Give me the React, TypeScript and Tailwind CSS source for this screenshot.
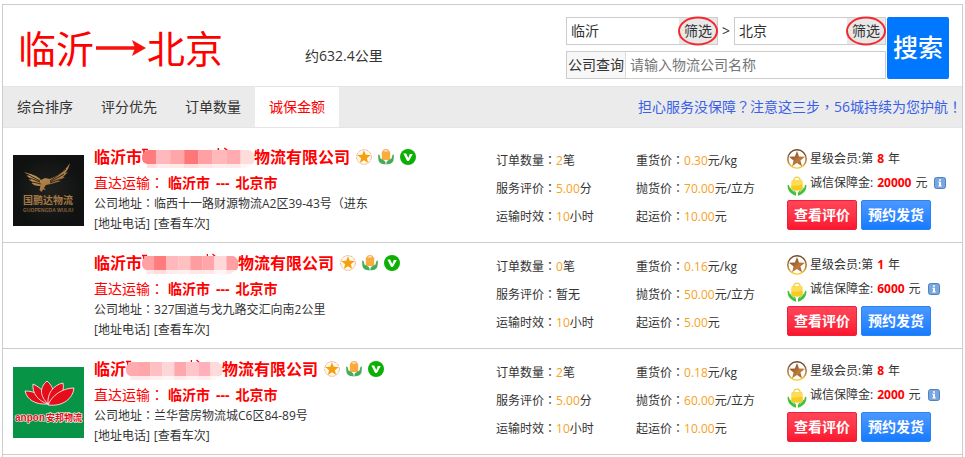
import React, { useState } from 'react';

type LogoKind = 'eagle' | 'lotus' | null;

interface Company {
  id: number;
  logo: LogoKind;
  prefix: string;
  maskWidth: number;
  maskColors: string[];
  address: string;
  orders: string;
  rating: string;
  hours: string;
  heavyPrice: string;
  lightPrice: string;
  startPrice: string;
  years: string;
  deposit: string;
}

const companies: Company[] = [
  {
    id: 1,
    logo: 'eagle',
    prefix: '临沂市',
    maskWidth: 112,
    maskColors: ['#ff7b7d', '#ffb9bc', '#ffa6a9', '#ff7678', '#ffa0a4', '#ffb9bb', '#ffabb0', '#ffdcdc'],
    address: '临西十一路财源物流A2区39-43号（进东',
    orders: '2',
    rating: '5.00',
    hours: '10',
    heavyPrice: '0.30',
    lightPrice: '70.00',
    startPrice: '10.00',
    years: '8',
    deposit: '20000',
  },
  {
    id: 2,
    logo: null,
    prefix: '临沂市',
    maskWidth: 96,
    maskColors: ['#ffa0a2', '#ff7b7d', '#ffb9bc', '#ffc0c2', '#ff9ca0', '#ffa6ab', '#ffd8da', '#ffa0a3'],
    address: '327国道与戈九路交汇向南2公里',
    orders: '0',
    rating: '',
    hours: '10',
    heavyPrice: '0.16',
    lightPrice: '50.00',
    startPrice: '5.00',
    years: '1',
    deposit: '6000',
  },
  {
    id: 3,
    logo: 'lotus',
    prefix: '临沂',
    maskWidth: 96,
    maskColors: ['#ffaaae', '#ffa6aa', '#ffc0c3', '#ffd6d8', '#ffa8ac', '#ffc5c8', '#ffb0b8', '#ffdada'],
    address: '兰华营房物流城C6区84-89号',
    orders: '2',
    rating: '5.00',
    hours: '10',
    heavyPrice: '0.18',
    lightPrice: '60.00',
    startPrice: '10.00',
    years: '8',
    deposit: '2000',
  },
];

const sortTabs = ['综合排序', '评分优先', '订单数量', '诚保金额'];

const STAR = 'M10 1.5 12.2 7.3 18.4 7.6 13.6 11.5 15.2 17.5 10 14.1 4.8 17.5 6.4 11.5 1.6 7.6 7.8 7.3Z';

// Full-width punctuation, centred in its cell
const Mark = ({ children }: { children: string }) => (
  <span className="font-['Noto_Sans_CJK_TC',sans-serif] leading-none">{children}</span>
);

const StarBadge = () => (
  <svg viewBox="0 0 20 20" className="size-4 shrink-0">
    <circle cx="10" cy="10" r="9.2" fill="#fffaf3" stroke="#e8b184" strokeWidth="1.1" strokeDasharray="4 1" />
    <path d={STAR} fill="#f7a00c" />
  </svg>
);

const HandsBadge = () => (
  <svg viewBox="0 0 16 16" className="size-4 shrink-0">
    <path d="M5.2 3.2C5.2-.2 10.8-.2 10.8 3.2" fill="none" stroke="#f5b264" strokeWidth="1.2" />
    <path d="M3.8 2.4h8.400v8.600H3.800Z" fill="#f9ab3e" />
    <path d="M.1 6C.3 5.200 1.300 5.200 1.700 6.400L2.500 9.500l4 2.200c1 .7 1.200 2 1.100 3.800C3.600 15.400.8 14 .4 10.600Z" fill="#45ad58" />
    <path d="M15.900 6c-.2-.8-1.200-.8-1.600.4l-.8 3.100-4 2.200c-1 .7-1.200 2-1.100 3.800 4-.1 6.800-1.500 7.200-4.900Z" fill="#45ad58" />
  </svg>
);

const CheckBadge = () => (
  <svg viewBox="0 0 16 16" className="size-4 shrink-0">
    <circle cx="8" cy="8" r="8" fill="#0cb005" />
    <path d="M3.4 4.6h2.8L8.3 9l1.5-4h3L8.9 12H7.1Z" fill="#fff" />
  </svg>
);

const MemberIcon = () => (
  <svg viewBox="0 0 20 20" className="size-5">
    <defs>
      <linearGradient id="ring" x1="0" y1="0" x2="0" y2="1">
        <stop offset="0" stopColor="#6d4226" />
        <stop offset="0.6" stopColor="#b47a33" />
        <stop offset="1" stopColor="#ffd33b" />
      </linearGradient>
      <linearGradient id="bronze" x1="0" y1="0" x2="1" y2="1">
        <stop offset="0" stopColor="#6d3d1b" />
        <stop offset="0.6" stopColor="#c07a3a" />
        <stop offset="1" stopColor="#8a5222" />
      </linearGradient>
    </defs>
    <circle cx="10" cy="10" r="9.2" fill="#fff" stroke="url(#ring)" strokeWidth="1.5" />
    <path d={STAR} fill="url(#bronze)" transform="translate(.5 .5) scale(.95)" />
  </svg>
);

const DepositIcon = () => (
  <svg viewBox="0 0 20 20" className="size-5">
    <path d="M6.7 5.2C6.9-.3 13.1-.3 13.3 5.2" fill="none" stroke="#f2cf3a" strokeWidth="1.4" />
    <path d="M4.800 4.200h10.400l.8 9.300c-1.800 1.500-10.200 1.500-12 0Z" fill="#fbc91f" />
    <path d="M4.800 4.200h10.400l.3 3.600C12 10 8 10 4.500 9.500Z" fill="#fddd55" />
    <path d="M.6 9c1.400-.6 1.700.8 2 2.600L7.700 15c1.400 1 1.500 2.500 1.300 4.700-2.200-.4-3.200-1.500-4.800-2.500C1.700 15.600.4 12.500.6 9Z" fill="#43c035" />
    <path d="M19.400 9c-1.400-.6-1.700.8-2 2.600L12.300 15c-1.400 1-1.500 2.500-1.300 4.700 2.200-.4 3.200-1.500 4.800-2.500 2.500-1.600 3.800-4.700 3.600-8.200Z" fill="#43c035" />
    <path d="m4 12.600 3.300 3.200M16 12.600l-3.300 3.200" stroke="#fff" strokeWidth=".8" />
  </svg>
);

const InfoIcon = () => (
  <svg viewBox="0 0 12 12" className="size-3">
    <rect x=".5" y=".5" width="11" height="11" rx="2" fill="#79a6dc" stroke="#4f82c4" />
    <path d="M5 2.200h2v1.500H5ZM4.300 4.800H7v3.700h.8v1H4.300v-1H5V5.700h-.7Z" fill="#fff" />
  </svg>
);

const EagleLogo = () => (
  <svg viewBox="0 0 71 71" className="size-[71px]">
    <defs>
      <radialGradient id="night">
        <stop offset="0" stopColor="#20211f" />
        <stop offset="1" stopColor="#101211" />
      </radialGradient>
      <linearGradient id="gold" x1="0" y1="0" x2="1" y2="1">
        <stop offset="0" stopColor="#d8ad6b" />
        <stop offset="1" stopColor="#8b5a2a" />
      </linearGradient>
    </defs>
    <rect width="71" height="71" fill="url(#night)" />
    <path
      d="M11 17c6 2 13 3 17 8l4-2 5 1c7-3 14-7 20-16-1 4-2 7-5 10l3-1-5 5h2l-7 4h3l-10 3-5 1-2 3 2 2-3-.5-1.500 2.500-2-2 1-4c-4 .5-7-1-9-3l2-.5-5-3h3l-5-4h3Z"
      fill="url(#gold)"
    />
    <path d="M14 19l13 7M17 23l10 4M20 27l8 2M53 14l-16 12M51 19l-14 8M48 24l-11 4" stroke="#252018" strokeWidth=".9" />
    <text x="10" y="49" className="text-[10px] font-bold" fill="#a47845">国鹏达物流</text>
    <text x="10" y="57" className="font-['Liberation_Sans',sans-serif] text-[5px] font-bold" fill="#87633d">GUOPENGDA WULIU</text>
  </svg>
);

const LotusLogo = () => (
  <svg viewBox="0 0 71 71" className="size-[71px]">
    <rect width="71" height="71" fill="#079447" />
    <g fill="#e50d19" stroke="#fff" strokeWidth=".8" strokeLinejoin="round">
      <path d="M35 37C23 38 14 33 12 24c9 0 19 4 23 13Z" />
      <path d="M35 37c-10-3-16-11-15-20 9 4 14 11 15 20Z" />
      <path d="M35 37c-8-8-9-16-1-23 8 7 9 16 1 23Z" />
      <path d="M35 37c-1-10 5-19 15-21 2 10-4 18-15 21Z" />
      <path d="M35 38c4-10 15-17 26-17-1 11-12 19-26 17Z" />
    </g>
    <g fill="#e50d19" stroke="#fff" strokeWidth="1.200" paintOrder="stroke">
      <text x="2" y="54" className="font-['Liberation_Sans',sans-serif] text-[10px] font-bold">anpon</text>
      <text x="33" y="54" className="text-[9px] font-bold">安邦物流</text>
    </g>
  </svg>
);

const NameMask = ({ width, colors }: { width: number; colors: string[] }) => (
  <svg viewBox="0 0 113 22" preserveAspectRatio="none" className="h-[22px] shrink-0" style={{ width }}>
    <path d="M0 3.500h6M2 4v12M77 2v4M83 2l4 3" stroke="#f00" strokeWidth="1.500" fill="none" />
    <clipPath id="pill">
      <path d="M6 4h101c8 1 9 14 2 15l-5 3H5v-4C-2 17-2 6 6 4Z" />
    </clipPath>
    <g clipPath="url(#pill)">
      {colors.map((color, i) => (
        <g key={i} fill={color}>
          <rect x={i * 14.2} y="3" width="14.400" height="15" />
          <rect x={i * 14.2} y="18" width="14.400" height="4" opacity=".25" />
        </g>
      ))}
    </g>
  </svg>
);

const RedCircle = () => (
  <svg viewBox="0 0 42 30" className="pointer-events-none absolute -top-0.5 -left-0.5 h-[30px] w-[42px]">
    <ellipse cx="21" cy="15" rx="19" ry="13.500" fill="none" stroke="#f5282d" strokeWidth="2" />
  </svg>
);

interface CityFieldProps {
  label: string;
  value: string;
  onChange: (value: string) => void;
}

const CityField: React.FC<CityFieldProps> = ({ label, value, onChange }) => (
  <div className="flex h-7 w-[152px] border border-[#ccc]">
    <input
      aria-label={label}
      value={value}
      onChange={e => onChange(e.target.value)}
      className="min-w-0 flex-1 bg-white px-1 text-sm outline-none"
    />
    <button type="button" className="relative w-[38px] bg-[#e8e8e8] text-sm">
      筛选
      <RedCircle />
    </button>
  </div>
);

interface StatProps {
  label: string;
  value: string;
  unit: string;
}

const Stat: React.FC<StatProps> = ({ label, value, unit }) => (
  <p>
    {label}
    <Mark>：</Mark>
    <span className="text-[#f9a11b]">{value}</span>
    {unit}
  </p>
);

const CompanyRow: React.FC<{ company: Company }> = ({ company }) => (
  <li className="flex h-[106px] border-b border-[#ccc] text-xs whitespace-nowrap">
    <div className="ml-2.5 w-[81px] shrink-0 pt-[18px]">
      {company.logo === 'eagle' && <EagleLogo />}
      {company.logo === 'lotus' && <LotusLogo />}
    </div>

    <div className="min-w-0 flex-1 pt-[5px]">
      <div className="flex h-[30px] items-center gap-1.5">
        <h2 className="flex items-center text-base font-bold text-[#f00]">
          {company.prefix}
          <NameMask width={company.maskWidth} colors={company.maskColors} />
          物流有限公司
        </h2>
        <StarBadge />
        <HandsBadge />
        <CheckBadge />
      </div>
      <p className="flex text-sm leading-[22px] text-[#f00]">
        <span>直达运输<Mark>：</Mark></span>
        <strong className="ml-1 flex gap-1.5">
          <span>临沂市</span>
          <span>---</span>
          <span>北京市</span>
        </strong>
      </p>
      <p className="leading-5">公司地址<Mark>：</Mark>{company.address}</p>
      <p className="flex gap-1 leading-5">
        <a href="#contact">[地址电话]</a>
        <a href="#trips">[查看车次]</a>
      </p>
    </div>

    <div className="w-[140px] shrink-0 pt-2.5 leading-7">
      <Stat label="订单数量" value={company.orders} unit="笔" />
      <Stat label="服务评价" value={company.rating} unit={company.rating ? '分' : '暂无'} />
      <Stat label="运输时效" value={company.hours} unit="小时" />
    </div>

    <div className="w-[151px] shrink-0 pt-2.5 leading-7">
      <Stat label="重货价" value={company.heavyPrice} unit="元/kg" />
      <Stat label="抛货价" value={company.lightPrice} unit="元/立方" />
      <Stat label="起运价" value={company.startPrice} unit="元" />
    </div>

    <div className="w-[175px] shrink-0 pt-3">
      <p className="flex h-6 gap-[3px] leading-5">
        <MemberIcon />
        <span className="flex gap-1">
          星级会员:第 <strong className="text-[#f00]">{company.years}</strong> 年
        </span>
      </p>
      <div className="flex h-[27px] gap-[3px] leading-5">
        <span className="pt-[3px]"><DepositIcon /></span>
        <span className="flex gap-1">
          诚信保障金: <strong className="text-[#f00]">{company.deposit}</strong> 元
        </span>
        <button type="button" aria-label="保障金说明" className="ml-1 h-3 pt-1">
          <InfoIcon />
        </button>
      </div>
      <div className="flex gap-1 text-sm font-bold text-white">
        <button type="button" className="h-[30px] w-[70px] rounded-xs border border-[#ef2038] bg-linear-to-b from-[#ff4558] to-[#fb1530]">
          查看评价
        </button>
        <button type="button" className="h-[30px] w-[70px] rounded-xs border border-[#2784f5] bg-linear-to-b from-[#4a98ff] to-[#147bff]">
          预约发货
        </button>
      </div>
    </div>
  </li>
);

const App: React.FC = () => {
  const [from, setFrom] = useState('临沂');
  const [to, setTo] = useState('北京');
  const [keyword, setKeyword] = useState('');
  const [activeTab, setActiveTab] = useState('诚保金额');

  return (
    <div className="bg-white px-0.5 pt-1 font-['Open_Sans','Noto_Sans_CJK_SC',sans-serif] text-[#333]">
      <main className="border-x border-t border-[#ccc] pb-0.5">
        {/* Route and search */}
        <header className="flex pt-3 pr-[13px] pb-[7px] pl-[15px]">
          <h1 className="flex h-[62px] items-center text-[38px] leading-none text-[#f00]">
            临沂
            <svg viewBox="0 0 53 18" className="h-[18px] w-[53px]">
              <path d="M2 9h40" stroke="#fb1010" strokeWidth="3.500" />
              <path d="M38 1 52 9 38 17 41 9Z" fill="#fb1010" />
            </svg>
            北京
          </h1>
          <p className="ml-[82px] flex-1 pt-7 text-sm leading-[22px]">约632.4公里</p>

          <form className="flex gap-px" onSubmit={e => e.preventDefault()}>
            <div className="flex w-80 flex-col justify-between">
              <div className="flex items-center justify-between">
                <CityField label="出发城市" value={from} onChange={setFrom} />
                <span className="text-sm">&gt;</span>
                <CityField label="到达城市" value={to} onChange={setTo} />
              </div>
              <div className="flex h-7 border border-[#ccc] text-sm">
                <label htmlFor="company" className="flex items-center border-r border-[#ddd] bg-[#f7f7f7] px-px">
                  公司查询
                </label>
                <input
                  id="company"
                  value={keyword}
                  onChange={e => setKeyword(e.target.value)}
                  placeholder="请输入物流公司名称"
                  className="min-w-0 flex-1 px-1 outline-none placeholder:text-[#757575]"
                />
              </div>
            </div>
            <button type="submit" className="size-[62px] rounded-xs bg-[#07f] text-[25px] font-medium text-white">
              搜索
            </button>
          </form>
        </header>

        {/* Sort tabs */}
        <nav className="flex h-[42px] items-stretch border-y border-[#e5e5e5] bg-[#ebebeb] text-sm">
          {sortTabs.map(tab => (
            <button
              key={tab}
              type="button"
              onClick={() => setActiveTab(tab)}
              className={`px-3.5 ${activeTab === tab ? 'bg-white text-[#f00]' : ''}`}
            >
              {tab}
            </button>
          ))}
          <a href="#guide" className="ml-auto self-center text-[#3a5fe6]">
            担心服务没保障<Mark>？</Mark>注意这三步<Mark>，</Mark>56城持续为您护航<Mark>！</Mark>
          </a>
        </nav>

        {/* Company list */}
        <ul className="pt-[9px]">
          {companies.map(company => (
            <CompanyRow key={company.id} company={company} />
          ))}
        </ul>
      </main>
    </div>
  );
};

export default App;
